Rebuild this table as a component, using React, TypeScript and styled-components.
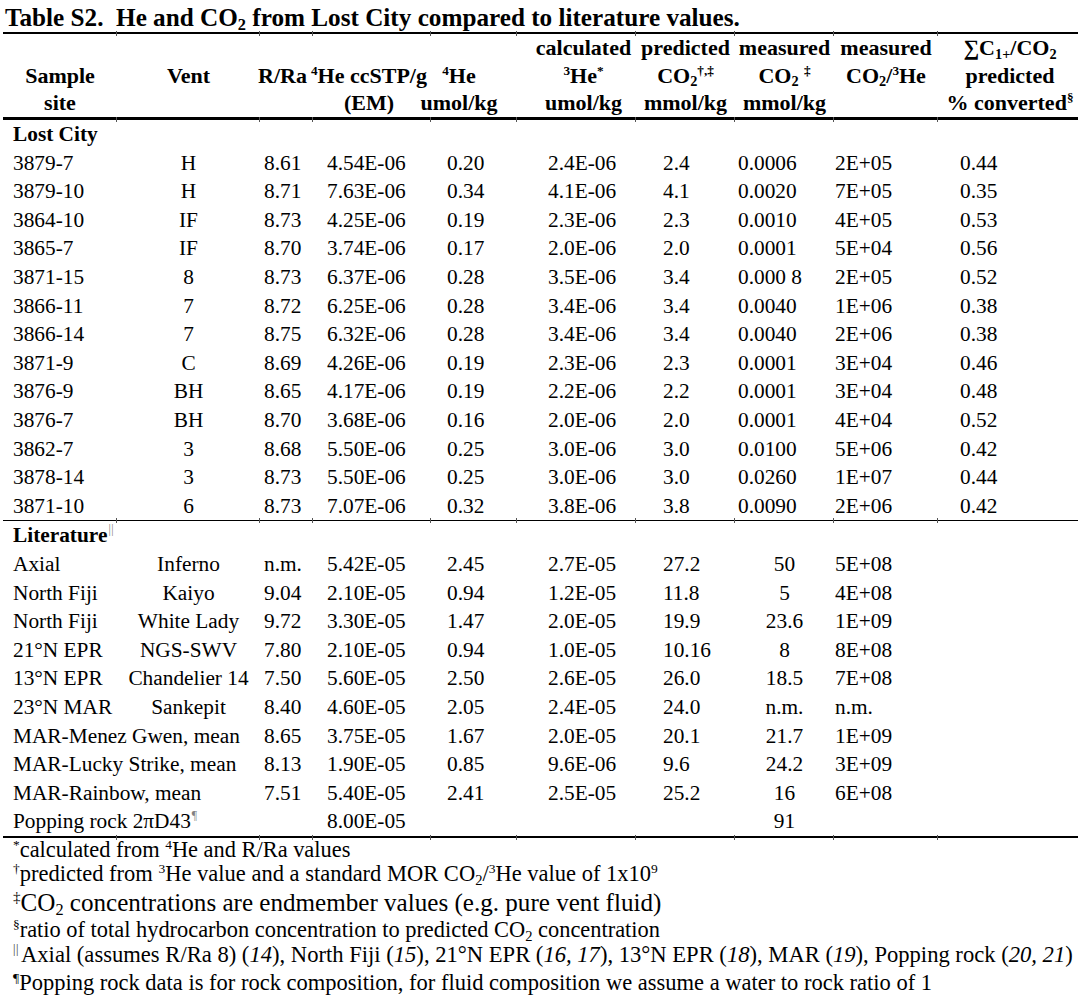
import React from 'react';
import styled, { createGlobalStyle } from 'styled-components';

const GlobalStyle = createGlobalStyle`
  html, body { margin: 0; padding: 0; background: #ffffff; }
  body { font-family: "Liberation Serif", "Times New Roman", serif; color: #000; }
`;

const COL_WIDTHS = [114, 143, 53, 118, 86, 119, 99, 99, 104, 140];
const COLS = COL_WIDTHS.map((w) => `${w}px`).join(' ');

type Align = 'left' | 'center';
type ColCfg = { align: Align; pad: number };

const DATA_COLS: ColCfg[] = [
  { align: 'left', pad: 10 },
  { align: 'center', pad: 0 },
  { align: 'left', pad: 4 },
  { align: 'left', pad: 14 },
  { align: 'left', pad: 16 },
  { align: 'left', pad: 31 },
  { align: 'left', pad: 27 },
  { align: 'left', pad: 3 },
  { align: 'left', pad: 1 },
  { align: 'left', pad: 22 },
];

const Page = styled.main`
  width: 1088px;
  height: 1006px;
  box-sizing: border-box;
  padding: 4px 0 0 3px;
  overflow: hidden;
`;

const Title = styled.h1`
  margin: 0 0 0 2px;
  font-size: 25.2px;
  line-height: 28px;
  font-weight: 700;
  white-space: nowrap;
`;

const Table = styled.div`
  width: 1075px;
  font-size: 21.33px;
`;

const Rule = styled.div<{ $weight: number }>`
  display: grid;
  grid-template-columns: ${COLS};
  border-top: ${(p) => p.$weight}px solid #000;
`;

const Tick = styled.span`
  position: relative;
  height: 0;
  &:not(:last-child)::after {
    content: '';
    position: absolute;
    right: 0;
    top: -3px;
    width: 1px;
    height: 5px;
    background: #555;
  }
`;

const HeaderRow = styled.div`
  display: grid;
  grid-template-columns: ${COLS};
  font-weight: 700;
  font-size: 22px;
`;

const HeadCell = styled.div<{ $shift: number }>`
  display: flex;
  flex-direction: column;
  align-items: center;
  transform: translateX(${(p) => p.$shift}px);
`;

const HeadLine = styled.div`
  height: 27.7px;
  line-height: 27.7px;
  white-space: nowrap;
`;

const Row = styled.div`
  display: grid;
  grid-template-columns: ${COLS};
  height: 28.6px;
  line-height: 28.6px;
`;

const SectionLabel = styled.div`
  grid-column: 1 / -1;
  padding-left: 10px;
  font-weight: 700;
  white-space: nowrap;
`;

const Cell = styled.div<{ $align: Align; $pad: number }>`
  text-align: ${(p) => p.$align};
  padding-left: ${(p) => p.$pad}px;
  white-space: nowrap;
  overflow: visible;
`;

const Sup = styled.span`
  font-size: 0.6em;
  position: relative;
  top: -0.6em;
  line-height: 0;
  vertical-align: baseline;
`;

const Sub = styled.span`
  font-size: 0.65em;
  position: relative;
  top: 0.25em;
  line-height: 0;
  vertical-align: baseline;
`;

const Mark = styled(Sup)`
  color: #808080;
  font-weight: 400;
  font-size: 0.55em;
  top: -0.8em;
  margin-left: 1px;
`;

const BarPair = styled.span`
  letter-spacing: 0.5px;
`;

const Notes = styled.div`
  padding-left: 10px;
`;

const Note = styled.p<{ $size: number; $top: number }>`
  margin: ${(p) => p.$top}px 0 0 0;
  font-size: ${(p) => p.$size}px;
  line-height: 25px;
  white-space: nowrap;
`;

const NoteMark = styled.span`
  font-size: 0.6em;
  position: relative;
  top: -0.6em;
  line-height: 0;
`;

const BarMark = styled(NoteMark)`
  color: #333333;
  font-size: 0.55em;
  top: -0.75em;
  margin-right: 2px;
`;

const He = ({ n }: { n: string }) => (
  <>
    <Sup>{n}</Sup>He
  </>
);

const CO2 = () => (
  <>
    CO<Sub>2</Sub>
  </>
);

const DoubleBar = () => <BarPair>||</BarPair>;

const HEADERS: { lines: React.ReactNode[]; shift?: number }[] = [
  { lines: ['', 'Sample', 'site'] },
  { lines: ['', 'Vent', ''] },
  { lines: ['', 'R/Ra', ''], shift: -4 },
  { lines: ['', <><He n="4" /> ccSTP/g</>, '(EM)'], shift: -3 },
  { lines: ['', <He n="4" />, 'umol/kg'], shift: -15 },
  { lines: ['calculated', <><He n="3" /><Sup>*</Sup></>, 'umol/kg'], shift: 7 },
  { lines: ['predicted', <><CO2 /><Sup>†,‡</Sup></>, 'mmol/kg'] },
  { lines: ['measured', <><CO2 /> <Sup>‡</Sup></>, 'mmol/kg'] },
  { lines: ['measured', <><CO2 />/<He n="3" /></>, ''] },
  { lines: [<>∑C<Sub>1+</Sub>/<CO2 /></>, 'predicted', <>% converted<Sup>§</Sup></>], shift: 2 },
];

const LOST_CITY: string[][] = [
  ['3879-7', 'H', '8.61', '4.54E-06', '0.20', '2.4E-06', '2.4', '0.0006', '2E+05', '0.44'],
  ['3879-10', 'H', '8.71', '7.63E-06', '0.34', '4.1E-06', '4.1', '0.0020', '7E+05', '0.35'],
  ['3864-10', 'IF', '8.73', '4.25E-06', '0.19', '2.3E-06', '2.3', '0.0010', '4E+05', '0.53'],
  ['3865-7', 'IF', '8.70', '3.74E-06', '0.17', '2.0E-06', '2.0', '0.0001', '5E+04', '0.56'],
  ['3871-15', '8', '8.73', '6.37E-06', '0.28', '3.5E-06', '3.4', '0.000 8', '2E+05', '0.52'],
  ['3866-11', '7', '8.72', '6.25E-06', '0.28', '3.4E-06', '3.4', '0.0040', '1E+06', '0.38'],
  ['3866-14', '7', '8.75', '6.32E-06', '0.28', '3.4E-06', '3.4', '0.0040', '2E+06', '0.38'],
  ['3871-9', 'C', '8.69', '4.26E-06', '0.19', '2.3E-06', '2.3', '0.0001', '3E+04', '0.46'],
  ['3876-9', 'BH', '8.65', '4.17E-06', '0.19', '2.2E-06', '2.2', '0.0001', '3E+04', '0.48'],
  ['3876-7', 'BH', '8.70', '3.68E-06', '0.16', '2.0E-06', '2.0', '0.0001', '4E+04', '0.52'],
  ['3862-7', '3', '8.68', '5.50E-06', '0.25', '3.0E-06', '3.0', '0.0100', '5E+06', '0.42'],
  ['3878-14', '3', '8.73', '5.50E-06', '0.25', '3.0E-06', '3.0', '0.0260', '1E+07', '0.44'],
  ['3871-10', '6', '8.73', '7.07E-06', '0.32', '3.8E-06', '3.8', '0.0090', '2E+06', '0.42'],
];

const LITERATURE: React.ReactNode[][] = [
  ['Axial', 'Inferno', 'n.m.', '5.42E-05', '2.45', '2.7E-05', '27.2', '50', '5E+08', ''],
  ['North Fiji', 'Kaiyo', '9.04', '2.10E-05', '0.94', '1.2E-05', '11.8', '5', '4E+08', ''],
  ['North Fiji', 'White Lady', '9.72', '3.30E-05', '1.47', '2.0E-05', '19.9', '23.6', '1E+09', ''],
  ['21°N EPR', 'NGS-SWV', '7.80', '2.10E-05', '0.94', '1.0E-05', '10.16', '8', '8E+08', ''],
  ['13°N EPR', 'Chandelier 14', '7.50', '5.60E-05', '2.50', '2.6E-05', '26.0', '18.5', '7E+08', ''],
  ['23°N MAR', 'Sankepit', '8.40', '4.60E-05', '2.05', '2.4E-05', '24.0', 'n.m.', 'n.m.', ''],
  ['MAR-Menez Gwen, mean', '', '8.65', '3.75E-05', '1.67', '2.0E-05', '20.1', '21.7', '1E+09', ''],
  ['MAR-Lucky Strike, mean', '', '8.13', '1.90E-05', '0.85', '9.6E-06', '9.6', '24.2', '3E+09', ''],
  ['MAR-Rainbow, mean', '', '7.51', '5.40E-05', '2.41', '2.5E-05', '25.2', '16', '6E+08', ''],
  [<>Popping rock 2πD43<Mark>¶</Mark></>, '', '', '8.00E-05', '', '', '', '91', '', ''],
];

const RuleLine = ({ weight }: { weight: number }) => (
  <Rule $weight={weight}>
    {COL_WIDTHS.map((_, i) => (
      <Tick key={i} />
    ))}
  </Rule>
);

const DataRow = ({ cells, overrides }: { cells: React.ReactNode[]; overrides?: Record<number, ColCfg> }) => (
  <Row>
    {cells.map((c, i) => {
      const cfg = overrides?.[i] ?? DATA_COLS[i];
      return (
        <Cell key={i} $align={cfg.align} $pad={cfg.pad}>
          {c}
        </Cell>
      );
    })}
  </Row>
);

const litOverrides: Record<number, ColCfg> = { 7: { align: 'center', pad: 0 } };

export default function App() {
  return (
    <>
      <GlobalStyle />
      <Page>
        <Title>
          Table S2.&nbsp; He and <CO2 /> from Lost City compared to literature values.
        </Title>
        <Table>
          <RuleLine weight={2} />
          <HeaderRow>
            {HEADERS.map((h, i) => (
              <HeadCell key={i} $shift={h.shift ?? 0}>
                {h.lines.map((l, j) => (
                  <HeadLine key={j}>{l === '' ? '\u00a0' : l}</HeadLine>
                ))}
              </HeadCell>
            ))}
          </HeaderRow>
          <RuleLine weight={3} />
          <Row>
            <SectionLabel>Lost City</SectionLabel>
          </Row>
          {LOST_CITY.map((r, i) => (
            <DataRow key={i} cells={r} />
          ))}
          <RuleLine weight={1.5} />
          <Row>
            <SectionLabel>
              Literature
              <Mark>
                <DoubleBar />
              </Mark>
            </SectionLabel>
          </Row>
          {LITERATURE.map((r, i) => (
            <DataRow key={i} cells={r} overrides={litOverrides} />
          ))}
          <RuleLine weight={2} />
        </Table>
        <Notes>
          <Note $size={22.4} $top={-1}>
            <NoteMark>*</NoteMark>calculated from <Sup>4</Sup>He and R/Ra values
          </Note>
          <Note $size={22.5} $top={-1}>
            <NoteMark>†</NoteMark>predicted from <Sup>3</Sup>He value and a standard MOR CO<Sub>2</Sub>/
            <Sup>3</Sup>He value of 1x10<Sup>9</Sup>
          </Note>
          <Note $size={25.1} $top={4}>
            <NoteMark>‡</NoteMark>CO<Sub>2</Sub> concentrations are endmember values (e.g. pure vent fluid)
          </Note>
          <Note $size={22.4} $top={2}>
            <NoteMark>§</NoteMark>ratio of total hydrocarbon concentration to predicted CO<Sub>2</Sub> concentration
          </Note>
          <Note $size={22.6} $top={0}>
            <BarMark>
              <DoubleBar />
            </BarMark>
            Axial (assumes R/Ra 8) (<i>14</i>), North Fiji (<i>15</i>), 21°N EPR (<i>16, 17</i>), 13°N EPR (
            <i>18</i>), MAR (<i>19</i>), Popping rock (<i>20, 21</i>)
          </Note>
          <Note $size={22.5} $top={3}>
            <NoteMark>¶</NoteMark>Popping rock data is for rock composition, for fluid composition we assume a water
            to rock ratio of 1
          </Note>
        </Notes>
      </Page>
    </>
  );
}
